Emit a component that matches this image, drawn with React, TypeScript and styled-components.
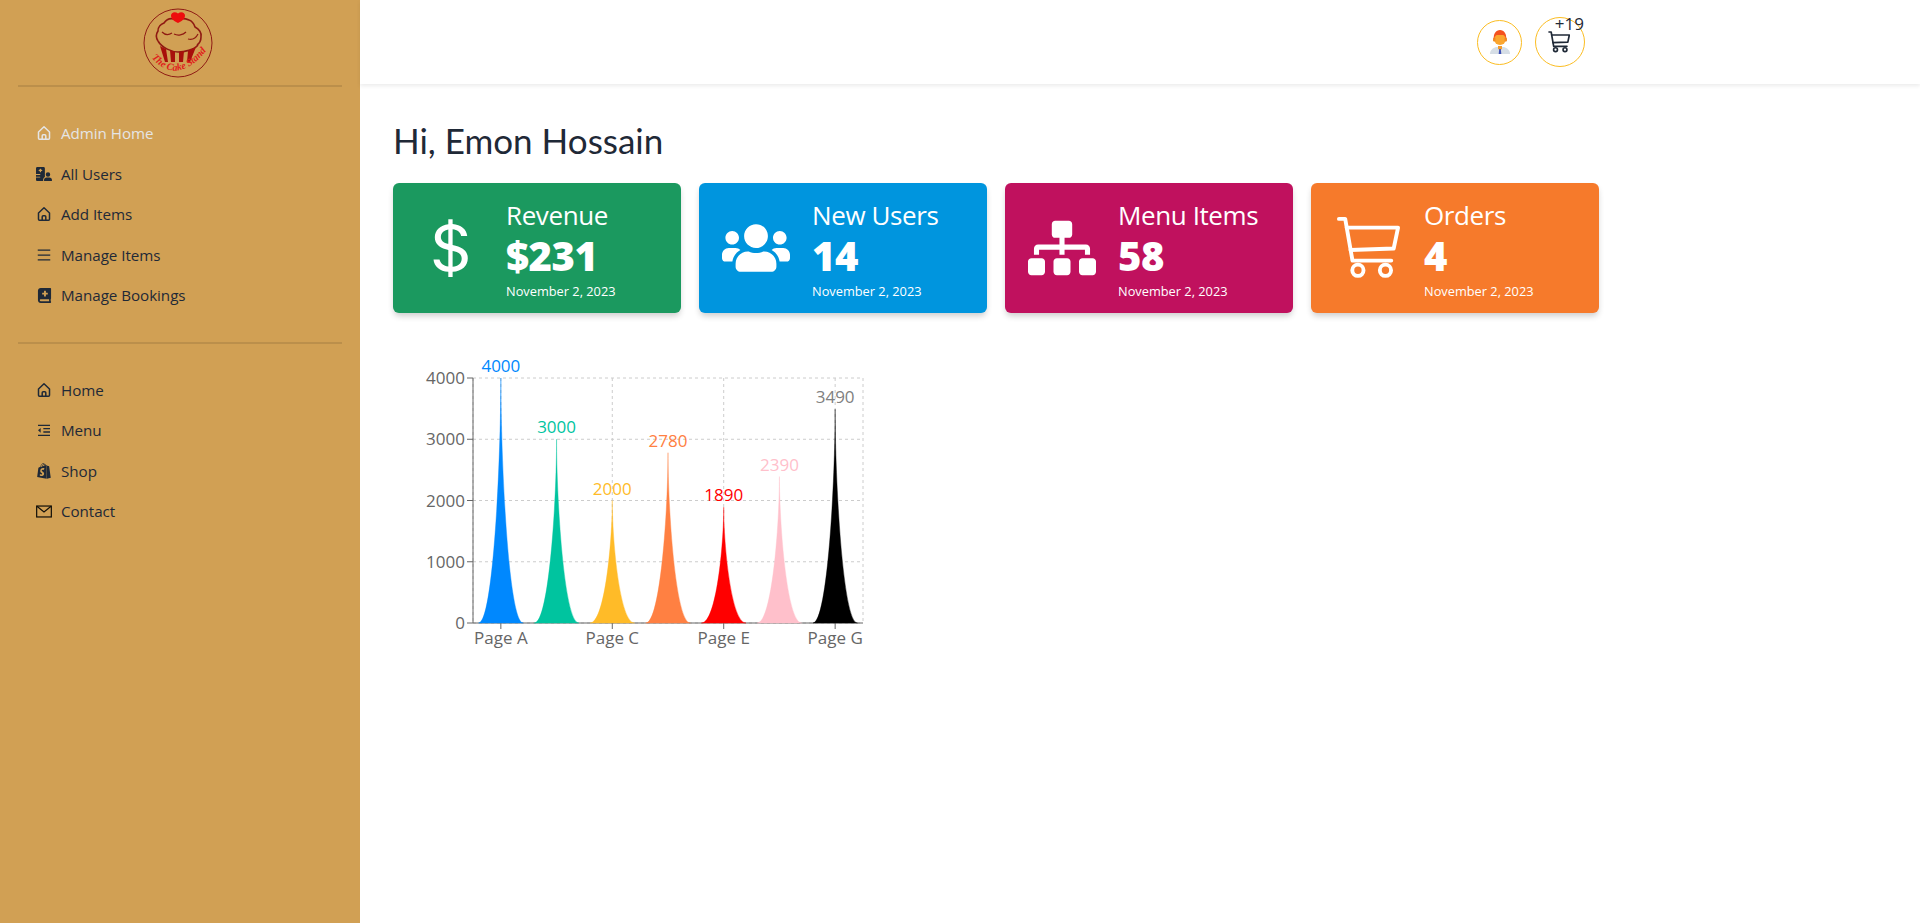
import styled, { createGlobalStyle } from 'styled-components';
import { BsCurrencyDollar } from 'react-icons/bs';
import { AiOutlineMenu } from 'react-icons/ai';
import { FaBookMedical, FaShopify, FaSitemap, FaUsers } from 'react-icons/fa';
import { FaHospitalUser } from 'react-icons/fa6';
import { RiIndentDecrease } from 'react-icons/ri';
import type { ReactNode } from 'react';

const GlobalStyle = createGlobalStyle`
  * { box-sizing: border-box; }
  body {
    margin: 0;
    background: #fff;
    font-family: "Open Sans", "Noto Sans", sans-serif;
    color: #1f2937;
  }
`;

const Logo = () => (
  <svg width="70" height="70" viewBox="0 0 70 70">
    <defs>
      <path id="logoArc" d="M7 48 Q33 80 64 42" />
    </defs>
    <circle cx="35" cy="35" r="34" fill="none" stroke="#8f1b14" strokeWidth="1" />
    <path
      d="M15 33c-2-3-2-7 0-10 0-4 3-7 6-8 2-3 6-5 10-4 4-1 11-1 15 1 3 1 5 4 6 7 4 2 7 6 6 10 0 3-1 6-4 8"
      fill="none"
      stroke="#8f1a12"
      strokeWidth="1.6"
    />
    <path d="M19 24c3 3 7 3 10 1M31 26c4 2 9 1 12-2M45 31c4 1 8-1 10-5" fill="none" stroke="#8f1a12" strokeWidth="1.2" />
    <path d="M15 33c4 7 14 11 20 11s16-2 20-7" fill="none" stroke="#8f1a12" strokeWidth="1.6" />
    <path d="M17 38l5 16h3l-2-13zM27 42l1 12h4V44zM36 44v10h4l1-11zM45 43l-1 11h3l6-15z" fill="#a80f0b" />
    <path d="M35 15c-4-2-7-4-7-7.500 0-3 4-4.500 7-2 3-2.500 7-1 7 2 0 3.500-3 5.500-7 7.500z" fill="#ee0d0d" />
    <text fontFamily="'Liberation Serif', serif" fontStyle="italic" fontSize="10" fill="#e0201c" fontWeight="700">
      <textPath href="#logoArc" startOffset="3%">
        The Cake Stand
      </textPath>
    </text>
  </svg>
);

const Avatar = () => (
  <svg width="22" height="26" viewBox="0 0 22 26">
    <path d="M1 25c0-4 3-6 6-7h8c3 1 6 3 6 7z" fill="#d6dee6" />
    <path d="M9 17h4v3l-2 1-2-1z" fill="#f39c2d" />
    <path d="M10.200 20h1.600l.5 5h-2.600z" fill="#3f51b5" />
    <circle cx="11" cy="10" r="6" fill="#fba62f" />
    <rect x="4" y="8.500" width="2.500" height="4" rx="1" fill="#f08c24" />
    <rect x="15.500" y="8.500" width="2.500" height="4" rx="1" fill="#f08c24" />
    <path d="M5 10c-1-5 2-9 6-9s7 4 6 9c-1-3-2-4-3-4H8c-1 0-2 1-3 4z" fill="#f4511e" />
  </svg>
);

const HomeIcon = () => (
  <svg width="16" height="16" viewBox="0 0 16 16" fill="none" stroke="currentColor" strokeWidth="1.500" strokeLinejoin="round">
    <path d="M2.500 7 8 1.800 13.500 7v6.200a1 1 0 0 1-1 1h-9a1 1 0 0 1-1-1z" />
    <path d="M6.200 14v-3.200a1 1 0 0 1 1-1h1.600a1 1 0 0 1 1 1V14" />
  </svg>
);

const MailIcon = () => (
  <svg width="17" height="13" viewBox="0 0 17 13" fill="none" stroke="#14110a" strokeWidth="1.300">
    <rect x="0.700" y="0.700" width="15.600" height="11.600" />
    <path d="M1 1l7.500 6L16 1" />
  </svg>
);

const CartIcon = ({ size, weight }: { size: number; weight: number }) => (
  <svg width={size} height={size} viewBox="0 0 66 66" fill="none" stroke="currentColor" strokeWidth={weight} strokeLinecap="round" strokeLinejoin="round">
    <path d="M3 3h6.500L17 46h40" />
    <path d="M11 12h53l-4.500 21.500L15 35" />
    <circle cx="22.600" cy="56" r="5.800" />
    <circle cx="51" cy="56" r="5.800" />
  </svg>
);

const adminLinks: { label: string; icon: ReactNode; active?: boolean }[] = [
  { label: 'Admin Home', icon: <HomeIcon />, active: true },
  { label: 'All Users', icon: <FaHospitalUser size={16} /> },
  { label: 'Add Items', icon: <HomeIcon /> },
  { label: 'Manage Items', icon: <AiOutlineMenu size={16} /> },
  { label: 'Manage Bookings', icon: <FaBookMedical size={15} /> },
];

const siteLinks: { label: string; icon: ReactNode; active?: boolean }[] = [
  { label: 'Home', icon: <HomeIcon /> },
  { label: 'Menu', icon: <RiIndentDecrease size={16} /> },
  { label: 'Shop', icon: <FaShopify size={16} /> },
  { label: 'Contact', icon: <MailIcon /> },
];

const stats = [
  { title: 'Revenue', value: '$231', bg: '#1b995f', icon: <BsCurrencyDollar size={66} /> },
  { title: 'New Users', value: '14', bg: '#0095de', icon: <FaUsers size={68} /> },
  { title: 'Menu Items', value: '58', bg: '#c0115e', icon: <FaSitemap size={68} /> },
  { title: 'Orders', value: '4', bg: '#f67a2b', icon: <CartIcon size={64} weight={4} /> },
];

const chartData = [
  { name: 'Page A', uv: 4000, color: '#0088FE', label: '#0088FE' },
  { name: 'Page B', uv: 3000, color: '#00C49F', label: '#00C49F' },
  { name: 'Page C', uv: 2000, color: '#FFBB28', label: '#FFBB28' },
  { name: 'Page D', uv: 2780, color: '#FF8042', label: '#FF8042' },
  { name: 'Page E', uv: 1890, color: 'red', label: 'red' },
  { name: 'Page F', uv: 2390, color: 'pink', label: 'pink' },
  { name: 'Page G', uv: 3490, color: 'black', label: '#808080' },
];

// plot area inside the chart
const plot = { left: 80, right: 470, top: 30, bottom: 275 };
const plotW = plot.right - plot.left;
const plotH = plot.bottom - plot.top;
const band = plotW / chartData.length;
const barW = band * 0.8;

const barPath = (x: number, y: number, w: number, h: number) =>
  `M${x},${y + h}C${x + w / 3},${y + h} ${x + w / 2},${y + h / 3} ${x + w / 2},${y}` +
  `C${x + w / 2},${y + h / 3} ${x + (2 * w) / 3},${y + h} ${x + w},${y + h}Z`;

const Chart = () => {
  const yTicks = [0, 1000, 2000, 3000, 4000];
  const yOf = (v: number) => plot.bottom - (v / 4000) * plotH;
  const centers = chartData.map((_, i) => plot.left + band * (i + 0.5));
  return (
    <ChartSvg width="500" height="310" viewBox="0 0 500 310">
      <g stroke="#ccc" strokeDasharray="3 3" fill="none">
        {yTicks.map((t) => (
          <line key={t} x1={plot.left} x2={plot.right} y1={yOf(t)} y2={yOf(t)} />
        ))}
        {[plot.left, centers[0], centers[2], centers[4], centers[6], plot.right].map((x) => (
          <line key={x} x1={x} x2={x} y1={plot.top} y2={plot.bottom} />
        ))}
      </g>
      <g stroke="#666" fill="none">
        <line x1={plot.left} x2={plot.right} y1={plot.bottom} y2={plot.bottom} />
        <line x1={plot.left} x2={plot.left} y1={plot.top} y2={plot.bottom} />
        {yTicks.map((t) => (
          <line key={t} x1={plot.left - 6} x2={plot.left} y1={yOf(t)} y2={yOf(t)} />
        ))}
        {[0, 2, 4, 6].map((i) => (
          <line key={i} x1={centers[i]} x2={centers[i]} y1={plot.bottom} y2={plot.bottom + 6} />
        ))}
      </g>
      {yTicks.map((t) => (
        <AxisText key={t} x={plot.left - 8} y={yOf(t)} dy="0.355em" textAnchor="end">
          {t}
        </AxisText>
      ))}
      {[0, 2, 4, 6].map((i) => (
        <AxisText key={i} x={centers[i]} y={plot.bottom + 21} textAnchor="middle">
          {chartData[i].name}
        </AxisText>
      ))}
      {chartData.map((d, i) => {
        const y = yOf(d.uv);
        return (
          <g key={d.name}>
            <path
              d={barPath(centers[i] - barW / 2, y, barW, plot.bottom - y)}
              fill={d.color}
              stroke={d.color}
              strokeWidth="0.4"
            />
            <BarLabel x={centers[i]} y={y - 6} fill={d.label} textAnchor="middle">
              {d.uv}
            </BarLabel>
          </g>
        );
      })}
    </ChartSvg>
  );
};

const NavList = ({ links }: { links: typeof adminLinks }) => (
  <Nav>
    {links.map((link) => (
      <NavRow key={link.label} $active={link.active}>
        <NavIcon>{link.icon}</NavIcon>
        {link.label}
      </NavRow>
    ))}
  </Nav>
);

export default function App() {
  return (
    <>
      <GlobalStyle />
      <Page>
        <Sidebar>
          <LogoBox>
            <Logo />
          </LogoBox>
          <Divider />
          <NavList links={adminLinks} />
          <Divider />
          <NavList links={siteLinks} />
        </Sidebar>
        <Main>
          <Header>
            <AvatarCircle>
              <Avatar />
            </AvatarCircle>
            <CartCircle>
              <CartIcon size={22} weight={5} />
              <CartBadge>+19</CartBadge>
            </CartCircle>
          </Header>
          <Content>
            <Greeting>Hi, Emon Hossain</Greeting>
            <Stats>
              {stats.map((s) => (
                <StatCard key={s.title} $bg={s.bg}>
                  <StatIcon>{s.icon}</StatIcon>
                  <StatBody>
                    <StatTitle>{s.title}</StatTitle>
                    <StatValue>{s.value}</StatValue>
                    <StatDate>November 2, 2023</StatDate>
                  </StatBody>
                </StatCard>
              ))}
            </Stats>
            <Chart />
          </Content>
        </Main>
      </Page>
    </>
  );
}

const Page = styled.div`
  display: flex;
  min-height: 100vh;
`;

const Sidebar = styled.aside`
  width: 360px;
  flex: none;
  padding: 0 18px;
  background: #d1a054;
`;

const LogoBox = styled.div`
  height: 85px;
  padding: 8px 4px 0 0;
  display: flex;
  justify-content: center;
`;

const Divider = styled.div`
  height: 2px;
  background: #000;
  opacity: 0.1;
`;

const Nav = styled.ul`
  list-style: none;
  margin: 0;
  padding: 26px 0;
`;

const NavRow = styled.li<{ $active?: boolean }>`
  height: 40.5px;
  padding-left: 18px;
  display: flex;
  align-items: center;
  gap: 9px;
  font-size: 15.2px;
  letter-spacing: -0.05px;
  color: ${(p) => (p.$active ? '#e5e5e5' : '#1f2937')};
`;

const NavIcon = styled.span`
  width: 16px;
  display: flex;
  align-items: center;
  justify-content: center;
`;

const Main = styled.main`
  flex: 1;
  min-width: 0;
`;

const Header = styled.header`
  height: 84px;
  padding-right: 335px;
  display: flex;
  align-items: center;
  justify-content: flex-end;
  gap: 13px;
  box-shadow: 0 2px 4px rgba(0, 0, 0, 0.08);
`;

const AvatarCircle = styled.div`
  width: 45px;
  height: 45px;
  border: 1px solid #fbbd23;
  border-radius: 50%;
  display: flex;
  align-items: center;
  justify-content: center;
`;

const CartCircle = styled(AvatarCircle)`
  position: relative;
  width: 50px;
  height: 50px;
  padding: 0 2px 0 0;
`;

const CartBadge = styled.span`
  position: absolute;
  top: -6px;
  right: 0;
  font-size: 17px;
`;

const Content = styled.div`
  padding: 0 33px;
`;

const Greeting = styled.h2`
  margin: 0;
  padding-top: 32px;
  height: 99px;
  font-family: "Comic Sans MS", "Lato", cursive;
  font-size: 35px;
  font-weight: 400;
  line-height: 48px;
  color: #1f2937;
`;

const Stats = styled.div`
  display: flex;
  gap: 18px;
`;

const StatCard = styled.div<{ $bg: string }>`
  width: 288px;
  height: 130px;
  border-radius: 6px;
  background: ${(p) => p.$bg};
  color: #fff;
  display: flex;
  align-items: center;
  box-shadow: 0 4px 6px -1px rgba(0, 0, 0, 0.2);
`;

const StatIcon = styled.div`
  width: 113px;
  flex: none;
  display: flex;
  justify-content: center;
`;

const StatBody = styled.div`
  display: flex;
  flex-direction: column;
  padding-top: 4px;
`;

const StatTitle = styled.div`
  font-size: 26px;
  line-height: 36px;
  letter-spacing: -0.4px;
`;

const StatValue = styled.div`
  font-size: 40px;
  font-weight: 800;
  line-height: 46px;
  letter-spacing: -0.5px;
`;

const StatDate = styled.div`
  font-size: 12.8px;
  line-height: 24px;
`;

const ChartSvg = styled.svg`
  display: block;
  margin-top: 35px;
`;

const AxisText = styled.text`
  font-size: 17px;
  fill: #666;
`;

const BarLabel = styled.text`
  font-size: 17px;
`;
